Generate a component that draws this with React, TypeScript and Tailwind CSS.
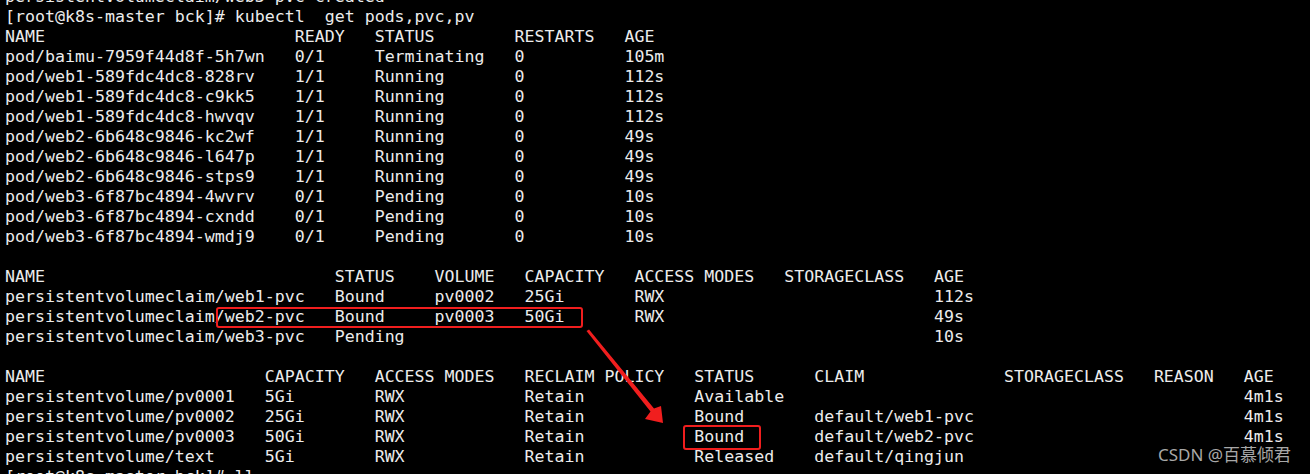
const pad = (cols: number[], cells: string[]) => {
  let out = ''
  cells.forEach((c, i) => {
    if (i > 0) out = out.padEnd(cols[i], ' ')
    out += c
  })
  return out
}

const podCols = [0, 29, 37, 51, 62]
const pvcCols = [0, 33, 43, 52, 63, 78, 93]
const pvCols = [0, 26, 37, 52, 69, 81, 100, 115, 124]

const lines: string[] = [
  'persistentvolumeclaim/web3-pvc created',
  '[root@k8s-master bck]# kubectl  get pods,pvc,pv',
  pad(podCols, ['NAME', 'READY', 'STATUS', 'RESTARTS', 'AGE']),
  pad(podCols, ['pod/baimu-7959f44d8f-5h7wn', '0/1', 'Terminating', '0', '105m']),
  pad(podCols, ['pod/web1-589fdc4dc8-828rv', '1/1', 'Running', '0', '112s']),
  pad(podCols, ['pod/web1-589fdc4dc8-c9kk5', '1/1', 'Running', '0', '112s']),
  pad(podCols, ['pod/web1-589fdc4dc8-hwvqv', '1/1', 'Running', '0', '112s']),
  pad(podCols, ['pod/web2-6b648c9846-kc2wf', '1/1', 'Running', '0', '49s']),
  pad(podCols, ['pod/web2-6b648c9846-l647p', '1/1', 'Running', '0', '49s']),
  pad(podCols, ['pod/web2-6b648c9846-stps9', '1/1', 'Running', '0', '49s']),
  pad(podCols, ['pod/web3-6f87bc4894-4wvrv', '0/1', 'Pending', '0', '10s']),
  pad(podCols, ['pod/web3-6f87bc4894-cxndd', '0/1', 'Pending', '0', '10s']),
  pad(podCols, ['pod/web3-6f87bc4894-wmdj9', '0/1', 'Pending', '0', '10s']),
  '',
  pad(pvcCols, ['NAME', 'STATUS', 'VOLUME', 'CAPACITY', 'ACCESS MODES', 'STORAGECLASS', 'AGE']),
  pad(pvcCols, ['persistentvolumeclaim/web1-pvc', 'Bound', 'pv0002', '25Gi', 'RWX', '', '112s']),
  pad(pvcCols, ['persistentvolumeclaim/web2-pvc', 'Bound', 'pv0003', '50Gi', 'RWX', '', '49s']),
  pad(pvcCols, ['persistentvolumeclaim/web3-pvc', 'Pending', '', '', '', '', '10s']),
  '',
  pad(pvCols, ['NAME', 'CAPACITY', 'ACCESS MODES', 'RECLAIM POLICY', 'STATUS', 'CLAIM', 'STORAGECLASS', 'REASON', 'AGE']),
  pad(pvCols, ['persistentvolume/pv0001', '5Gi', 'RWX', 'Retain', 'Available', '', '', '', '4m1s']),
  pad(pvCols, ['persistentvolume/pv0002', '25Gi', 'RWX', 'Retain', 'Bound', 'default/web1-pvc', '', '', '4m1s']),
  pad(pvCols, ['persistentvolume/pv0003', '50Gi', 'RWX', 'Retain', 'Bound', 'default/web2-pvc', '', '', '4m1s']),
  pad(pvCols, ['persistentvolume/text', '5Gi', 'RWX', 'Retain', 'Released', 'default/qingjun']),
  '[root@k8s-master bck]# ll',
]

export default function App() {
  return (
    <div className="relative w-[1310px] h-[474px] overflow-hidden bg-black">
      <div
        className="-mt-[13px] pl-[5px] text-[16.6px] leading-[20px] text-[#ececec] whitespace-pre"
        style={{ fontFamily: '"DejaVu Sans Mono", "Liberation Mono", monospace' }}
      >
        {lines.map((l, i) => (
          <div key={i} className="h-[20px]">{l}</div>
        ))}
      </div>

      {/* annotations */}
      <div className="absolute left-[216px] top-[307px] w-[367px] h-[21px] border-2 border-[#f01e1e] rounded-[3px]" />
      <div className="absolute left-[683px] top-[425px] w-[78px] h-[25px] border-2 border-[#f01e1e] rounded-[3px]" />
      <svg className="absolute left-0 top-0" width="1310" height="474">
        <path
          d="M586.5 331 L589 329.5 L654 408.5 L661 406 L663 423 L645 419 L650.5 411.5 Z"
          fill="#f01e1e"
        />
      </svg>

      <div
        className="absolute left-[1158px] top-[444px] text-[17px] leading-[22px] text-[#a8a8a8] whitespace-nowrap"
        style={{ fontFamily: '"Noto Sans", "Noto Sans CJK SC", sans-serif' }}
      >
        CSDN @百慕倾君
      </div>
    </div>
  )
}
